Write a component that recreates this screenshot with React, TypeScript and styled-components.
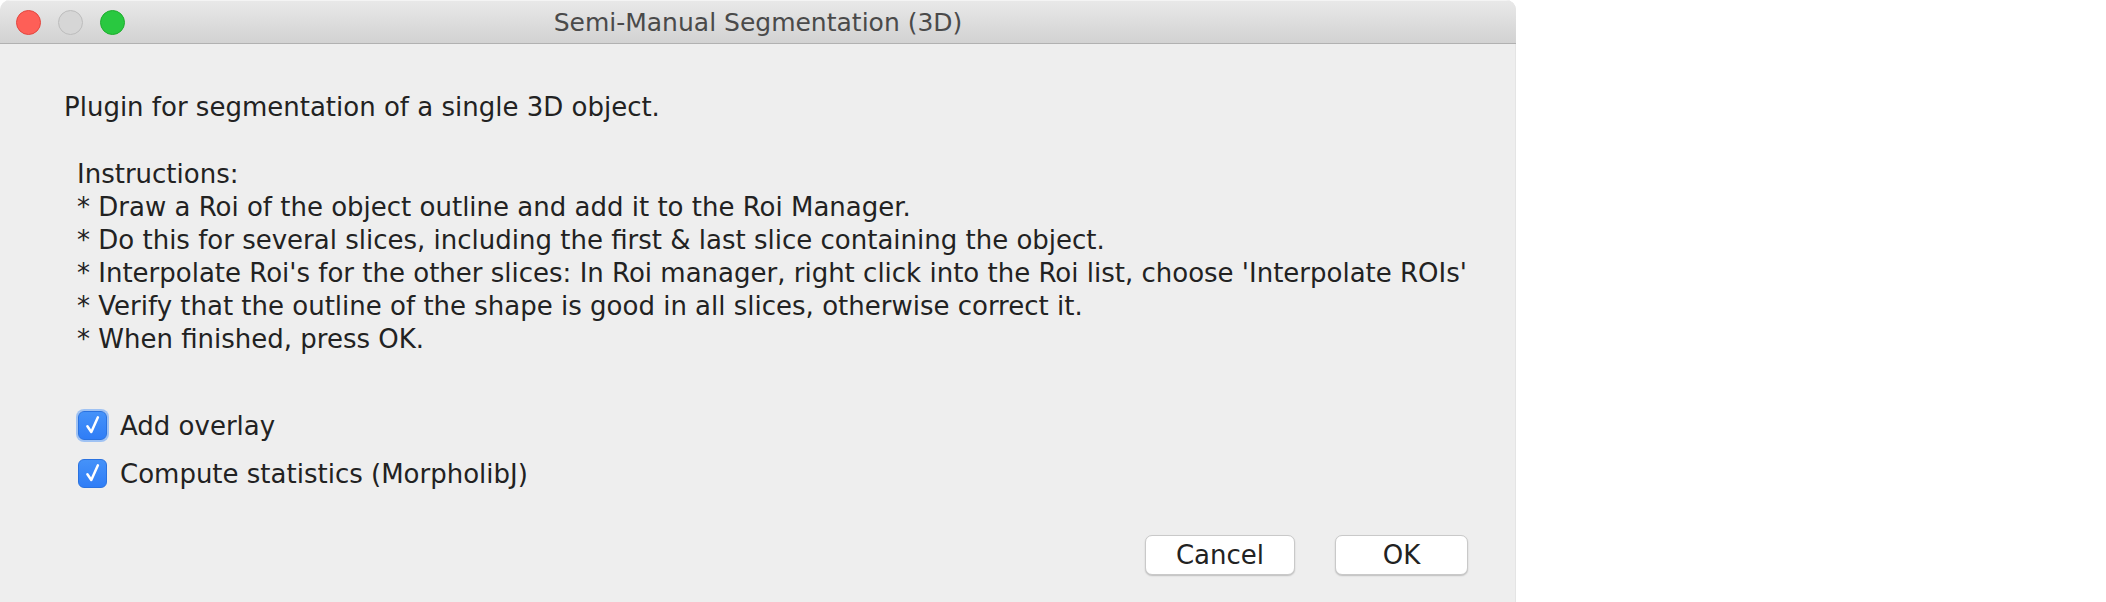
import React from 'react';
import styled, {createGlobalStyle} from 'styled-components';

const GlobalStyle = createGlobalStyle`
  html, body {
    margin: 0;
    padding: 0;
    background: #ffffff;
  }
  body {
    font-family: "DejaVu Sans", "Noto Sans", sans-serif;
    -webkit-font-smoothing: antialiased;
  }
`;

const instructions = [
  'Instructions:',
  '* Draw a Roi of the object outline and add it to the Roi Manager.',
  '* Do this for several slices, including the first & last slice containing the object.',
  "* Interpolate Roi's for the other slices: In Roi manager, right click into the Roi list, choose 'Interpolate ROIs'",
  '* Verify that the outline of the shape is good in all slices, otherwise correct it.',
  '* When finished, press OK.',
];

export default function App() {
  return (
    <Page>
      <GlobalStyle />
      <Window>
        <TitleBar>
          <Lights>
            <Light $color="#fe5f57" $border="#e2463f" />
            <Light $color="#d6d6d6" $border="#bcbcbc" />
            <Light $color="#29c840" $border="#1ead2e" />
          </Lights>
          <Title>Semi-Manual Segmentation (3D)</Title>
        </TitleBar>

        <Body>
          <Intro>Plugin for segmentation of a single 3D object.</Intro>

          <Instructions>
            {instructions.map((line) => (
              <Line key={line}>{line}</Line>
            ))}
          </Instructions>

          <Options>
            <Option>
              <CheckBox $focused>
                <CheckMark />
              </CheckBox>
              <Label>Add overlay</Label>
            </Option>
            <Option>
              <CheckBox>
                <CheckMark />
              </CheckBox>
              <Label>Compute statistics (MorpholibJ)</Label>
            </Option>
          </Options>

          <Buttons>
            <Button $width={150}>Cancel</Button>
            <Button $width={133}>OK</Button>
          </Buttons>
        </Body>
      </Window>
    </Page>
  );
}

function CheckMark() {
  return (
    <svg width="20" height="20" viewBox="0 0 20 20" fill="none">
      <path
        d="M4.4 11.2 L8.3 17 L14.9 2.3"
        stroke="#ffffff"
        strokeWidth="2.5"
        strokeLinecap="round"
        strokeLinejoin="round"
      />
    </svg>
  );
}

const Page = styled.div`
  display: flex;
  width: 2106px;
  height: 602px;
  overflow: hidden;
  background: #ffffff;
`;

const Window = styled.div`
  display: flex;
  flex-direction: column;
  width: 1516px;
  height: 602px;
  background: #eeeeee;
  border-top-left-radius: 10px;
  border-top-right-radius: 10px;
  overflow: hidden;
  box-shadow: inset -1px 0 0 #e4e4e4;
`;

const TitleBar = styled.div`
  position: relative;
  display: flex;
  align-items: center;
  justify-content: center;
  height: 43px;
  flex-shrink: 0;
  background: linear-gradient(#e9e9e9, #d2d2d2);
  border-bottom: 1px solid #b1b1b1;
  box-shadow: inset 0 1px 0 #f4f4f4;
`;

const Lights = styled.div`
  position: absolute;
  left: 16px;
  top: 10px;
  display: flex;
  gap: 17px;
`;

const Light = styled.div<{$color: string; $border: string}>`
  width: 25px;
  height: 25px;
  box-sizing: border-box;
  border-radius: 50%;
  background: ${(p) => p.$color};
  border: 1px solid ${(p) => p.$border};
`;

const Title = styled.div`
  font-size: 25px;
  color: #4a4a4a;
  padding-top: 1px;
`;

const Body = styled.div`
  display: flex;
  flex-direction: column;
  padding: 47px 48px 0 64px;
  color: #222222;
  font-size: 26px;
  line-height: 33px;
`;

const Intro = styled.div`
  white-space: nowrap;
`;

const Instructions = styled.div`
  display: flex;
  flex-direction: column;
  margin-top: 34px;
  padding-left: 13px;
`;

const Line = styled.div`
  white-space: nowrap;
`;

const Options = styled.div`
  display: flex;
  flex-direction: column;
  gap: 18px;
  margin-top: 54px;
  padding-left: 14px;
`;

const Option = styled.div`
  display: flex;
  align-items: center;
  gap: 13px;
  height: 30px;
`;

const CheckBox = styled.div<{$focused?: boolean}>`
  display: flex;
  align-items: center;
  justify-content: center;
  width: 29px;
  height: 29px;
  box-sizing: border-box;
  border-radius: 6px;
  background: linear-gradient(#4592f9, #2f7df6);
  border: 1px solid #2a72e0;
  box-shadow: ${(p) => (p.$focused ? '0 0 0 2px rgba(95, 158, 248, 0.55)' : 'none')};
`;

const Label = styled.span`
  white-space: nowrap;
  padding-top: 2px;
`;

const Buttons = styled.div`
  display: flex;
  justify-content: flex-end;
  gap: 40px;
  margin-top: 47px;
`;

const Button = styled.button<{$width: number}>`
  width: ${(p) => p.$width}px;
  height: 40px;
  padding: 0;
  border: 1px solid #c9c9c9;
  border-radius: 7px;
  background: #ffffff;
  box-shadow: 0 1px 1.5px rgba(0, 0, 0, 0.2);
  font-family: "DejaVu Sans", "Noto Sans", sans-serif;
  font-size: 26px;
  color: #222222;
`;
